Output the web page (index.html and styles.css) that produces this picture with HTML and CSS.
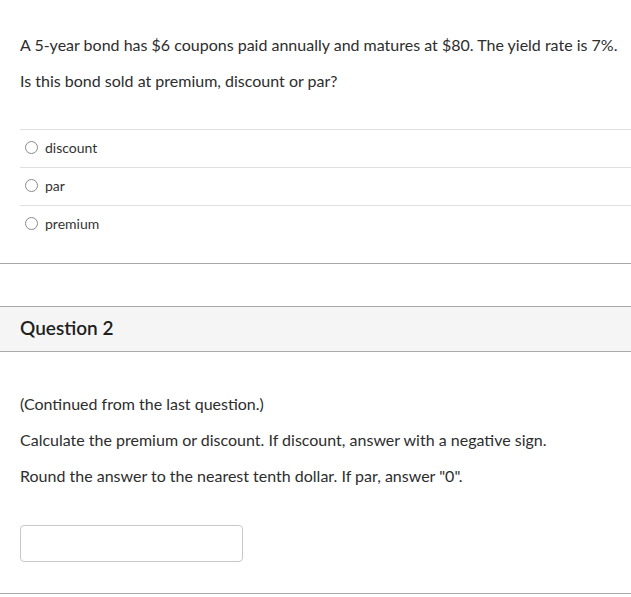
FILE: index.html
```html
<!DOCTYPE html>
<html>
<head>
<meta charset="utf-8">
<link rel="stylesheet" href="styles.css">
</head>
<body>
<div class="q1">
  <p class="txt first">A 5-year bond has $6 coupons paid annually and matures at $80. The yield rate is 7%.</p>
  <p class="txt">Is this bond sold at premium, discount or par?</p>
  <div class="options">
    <label class="opt"><span class="radio"></span>discount</label>
    <label class="opt"><span class="radio"></span>par</label>
    <label class="opt"><span class="radio"></span>premium</label>
  </div>
</div>
<div class="sep"></div>
<div class="qhead">Question 2</div>
<div class="q2">
  <p class="txt first">(Continued from the last question.)</p>
  <p class="txt">Calculate the premium or discount. If discount, answer with a negative sign.</p>
  <p class="txt">Round the answer to the nearest tenth dollar. If par, answer "0".</p>
  <div class="answer"></div>
</div>
<div class="sep bottom"></div>
</body>
</html>
```
FILE: styles.css
```css
html, body {
  margin: 0;
  padding: 0;
  background: #fff;
}
body {
  font-family: Lato, "Noto Sans", sans-serif;
  color: #2d2d2d;
  width: 631px;
  overflow: hidden;
}
.txt {
  margin: 16px 0 0 0;
  font-size: 16px;
  line-height: 20px;
}
.txt.first {
  margin-top: 0;
}
.q1 {
  padding: 35px 0 20px 20px;
}
.options {
  margin-top: 38px;
}
.opt {
  display: flex;
  align-items: center;
  height: 35px;
  padding: 0 0 2px 5px;
  box-sizing: content-box;
  border-top: 1px solid #e0e0e0;
  font-size: 14px;
  color: #333;
}
.radio {
  width: 11px;
  height: 11px;
  border: 1px solid #8a8a8a;
  border-radius: 50%;
  margin-right: 7px;
  box-sizing: content-box;
}
.sep {
  height: 1px;
  background: #a8a8a8;
}
.qhead {
  margin-top: 42px;
  height: 41px;
  border-top: 1px solid #aaa;
  border-bottom: 1px solid #aaa;
  background: #f5f5f5;
  display: flex;
  align-items: center;
  padding-left: 20px;
  padding-bottom: 3px;
  box-sizing: content-box;
  font-size: 19px;
  font-weight: 600;
  color: #1f1f1f;
}
.q2 {
  padding: 42px 0 31px 20px;
}
.answer {
  margin-top: 39px;
  width: 221px;
  height: 35px;
  border: 1px solid #c8c8c8;
  border-radius: 4px;
}
```
